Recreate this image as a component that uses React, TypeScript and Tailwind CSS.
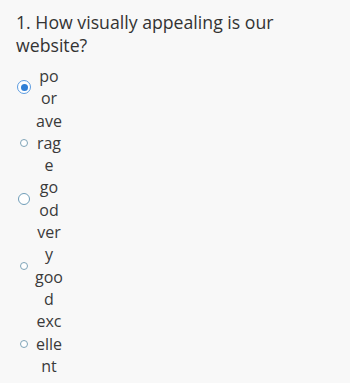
import React from "react";

const options = [
  { label: "poor", w: "w-[24px]", radio: "big", checked: true },
  { label: "average", w: "w-[29.5px]", radio: "small", checked: false },
  { label: "good", w: "w-[24px]", radio: "mid", checked: false },
  { label: "very good", w: "w-[29.5px]", radio: "small", checked: false },
  { label: "excellent", w: "w-[29.5px]", radio: "small", checked: false },
];

const Radio = ({ size, checked }: { size: string; checked: boolean }) => {
  if (checked) {
    return (
      <span className="flex h-[14px] w-[14px] items-center justify-center rounded-full border-[1.5px] border-[#5b9be0] bg-white">
        <span className="h-[7px] w-[7px] rounded-full bg-[#2f7fd6]" />
      </span>
    );
  }
  if (size === "mid") {
    return <span className="h-[12px] w-[12px] rounded-full border-[1.5px] border-[#6f9db8] bg-white" />;
  }
  return <span className="h-[8px] w-[8px] rounded-full border-[1.2px] border-[#7fa4b8] bg-white" />;
};

export default function App() {
  return (
    <div className="min-h-[383px] w-full bg-[#f8f8f8] px-4 pt-[11px] font-['Open_Sans',sans-serif] text-[#333333]">
      <h2 className="w-[318px] text-[17.7px] leading-[22.5px] font-normal">
        1. How visually appealing is our website?
      </h2>
      <div className="mt-[9px] flex flex-col">
        {options.map((o) => (
          <label key={o.label} className="flex items-center">
            <span className="flex w-4 justify-center">
              <Radio size={o.radio} checked={o.checked} />
            </span>
            <span className="flex w-[34px] justify-center">
              <span
                className={`${o.w} text-center text-[16px] leading-[22.3px] [overflow-wrap:anywhere] text-[#3a3a3a]`}
              >
                {o.label}
              </span>
            </span>
          </label>
        ))}
      </div>
    </div>
  );
}
